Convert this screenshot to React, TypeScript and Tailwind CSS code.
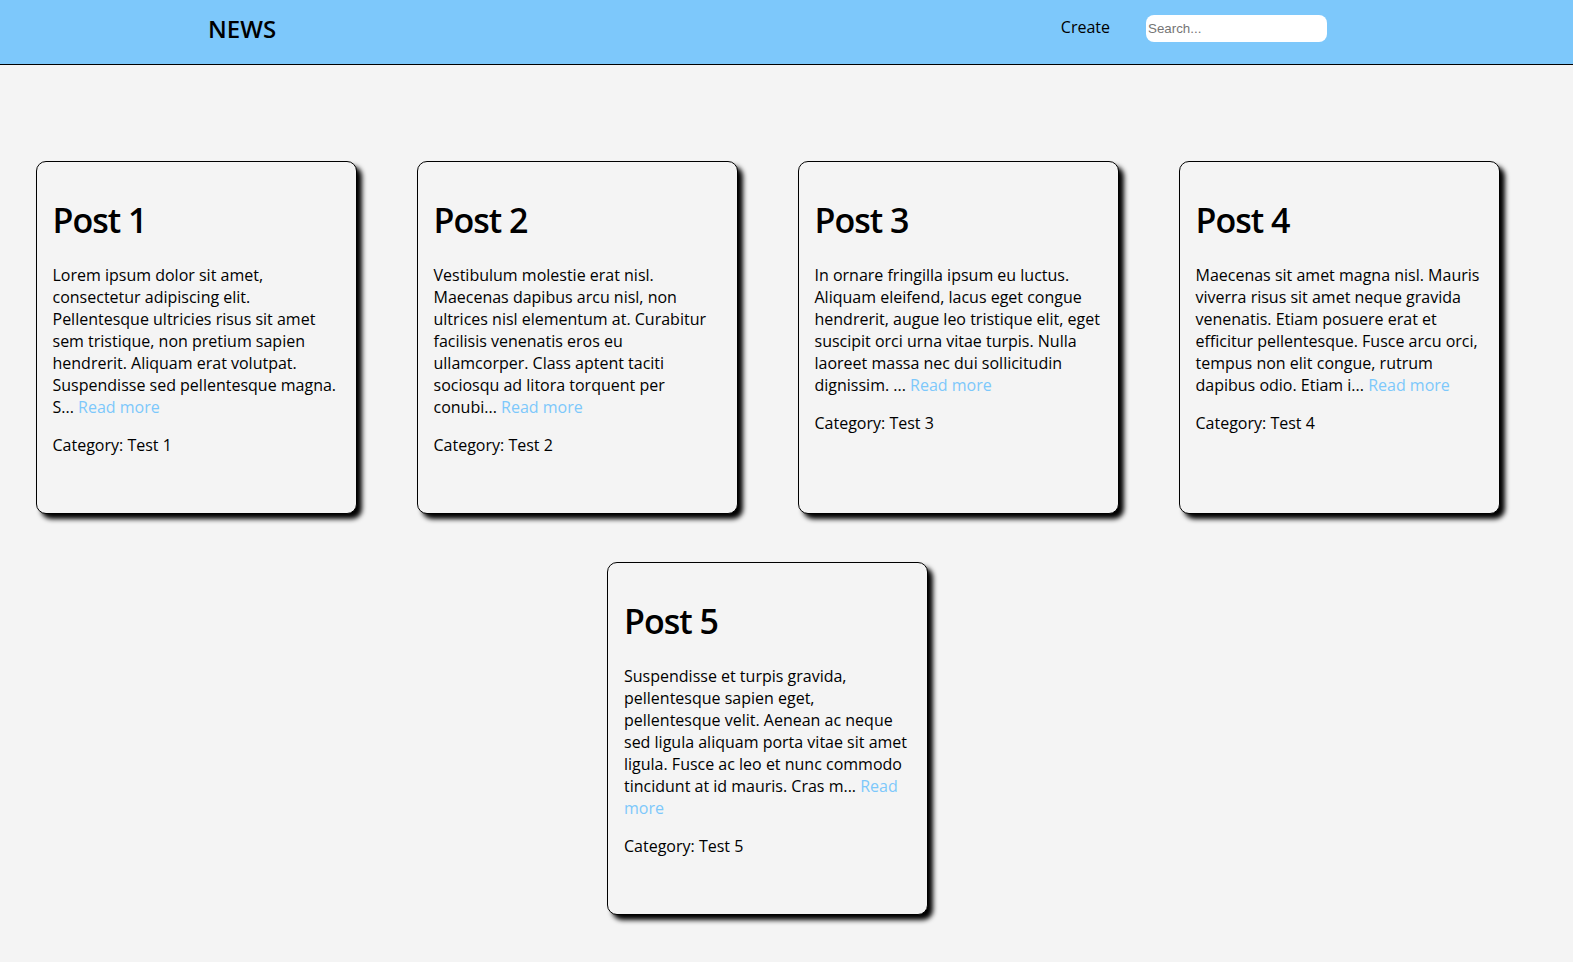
import React from "react";

const posts = [
  {
    title: "Post 1",
    body: "Lorem ipsum dolor sit amet, consectetur adipiscing elit. Pellentesque ultricies risus sit amet sem tristique, non pretium sapien hendrerit. Aliquam erat volutpat. Suspendisse sed pellentesque magna. S...",
    cat: "Test 1",
  },
  {
    title: "Post 2",
    body: "Vestibulum molestie erat nisl. Maecenas dapibus arcu nisl, non ultrices nisl elementum at. Curabitur facilisis venenatis eros eu ullamcorper. Class aptent taciti sociosqu ad litora torquent per conubi...",
    cat: "Test 2",
  },
  {
    title: "Post 3",
    body: "In ornare fringilla ipsum eu luctus. Aliquam eleifend, lacus eget congue hendrerit, augue leo tristique elit, eget suscipit orci urna vitae turpis. Nulla laoreet massa nec dui sollicitudin dignissim. ...",
    cat: "Test 3",
  },
  {
    title: "Post 4",
    body: "Maecenas sit amet magna nisl. Mauris viverra risus sit amet neque gravida venenatis. Etiam posuere erat et efficitur pellentesque. Fusce arcu orci, tempus non elit congue, rutrum dapibus odio. Etiam i...",
    cat: "Test 4",
  },
  {
    title: "Post 5",
    body: "Suspendisse et turpis gravida, pellentesque sapien eget, pellentesque velit. Aenean ac neque sed ligula aliquam porta vitae sit amet ligula. Fusce ac leo et nunc commodo tincidunt at id mauris. Cras m...",
    cat: "Test 5",
  },
];

function Card({ title, body, cat }: { title: string; body: string; cat: string }) {
  return (
    <div className="box-border w-[321px] h-[353px] border border-black rounded-[10px] bg-[#f4f4f4] shadow-[5px_5px_5px_#000] px-4 pt-[35px]">
      <h1 className="text-[34px] leading-[47px] font-semibold text-black tracking-[-1px]">{title}</h1>
      <p className="mt-[20px] text-[16px] leading-[22px] text-black">
        {body} <a className="text-[#7dc8fb] cursor-pointer">Read more</a>
      </p>
      <p className="mt-[16px] text-[16px] leading-[22px] text-black">Category: {cat}</p>
    </div>
  );
}

export default function App() {
  return (
    <div className="min-h-[962px] bg-[#f4f4f4] font-['Open_Sans',sans-serif]">
      <header className="h-[65px] bg-[#7dc8fb] border-b border-black flex items-start pl-[208px] pr-[246px]">
        <div className="mt-[17px] text-[24px] font-semibold text-black leading-none">NEWS</div>
        <div className="ml-auto mt-[15px] flex items-start gap-[36px]">
          <a className="mt-[4px] text-[16px] text-black leading-none cursor-pointer">Create</a>
          <input
            type="text"
            placeholder="Search..."
            className="w-[181px] h-[27px] rounded-[8px] bg-white px-[2px] text-[13.33px] font-['Liberation_Sans',Arial,sans-serif] placeholder:text-[#757575] outline-none"
          />
        </div>
      </header>
      <main className="pt-[96px] pb-[40px]">
        <div className="ml-[5px] w-[1525px] flex flex-wrap justify-center gap-x-[60px] gap-y-[48px]">
          {posts.map((p) => (
            <Card key={p.title} {...p} />
          ))}
        </div>
      </main>
    </div>
  );
}
